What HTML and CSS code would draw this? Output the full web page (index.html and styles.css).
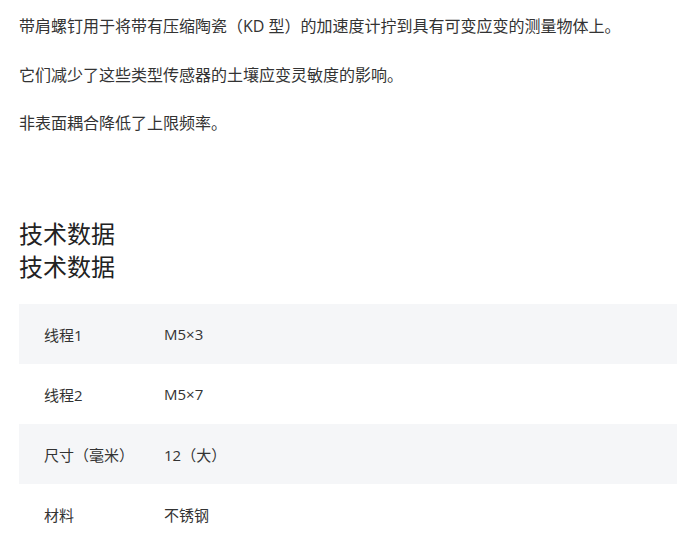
FILE: index.html
```html
<!DOCTYPE html>
<html lang="zh-CN">
<head>
<meta charset="utf-8">
<link rel="stylesheet" href="styles.css">
</head>
<body>
<main class="page">
  <section class="intro">
    <p>带肩螺钉用于将带有压缩陶瓷（KD 型）的加速度计拧到具有可变应变的测量物体上。</p>
    <p>它们减少了这些类型传感器的土壤应变灵敏度的影响。</p>
    <p>非表面耦合降低了上限频率。</p>
  </section>
  <h2 class="title">技术数据<br>技术数据</h2>
  <div class="specs">
    <div class="row shade"><span class="label">线程1</span><span class="value">M5×3</span></div>
    <div class="row"><span class="label">线程2</span><span class="value">M5×7</span></div>
    <div class="row shade"><span class="label">尺寸（毫米）</span><span class="value">12（大）</span></div>
    <div class="row"><span class="label">材料</span><span class="value">不锈钢</span></div>
  </div>
</main>
</body>
</html>
```
FILE: styles.css
```css
html, body {
  margin: 0;
  padding: 0;
  background: #fff;
}
body {
  font-family: "Open Sans", "Noto Sans CJK SC", sans-serif;
  color: #333;
  overflow: hidden;
}
.page {
  padding: 14px 0 0 19px;
}
.intro p {
  margin: 0 0 24.5px 0;
  font-size: 16px;
  line-height: 24px;
}
.title {
  margin: 82px 0 21px 0;
  font-size: 24px;
  font-weight: 400;
  line-height: 33px;
  color: #222;
}
.row {
  display: flex;
  align-items: center;
  height: 60px;
  font-size: 15px;
  color: #333;
}
.row.shade {
  background: #f5f6f8;
}
.label {
  width: 120px;
  padding-left: 25px;
  flex: none;
}
```
